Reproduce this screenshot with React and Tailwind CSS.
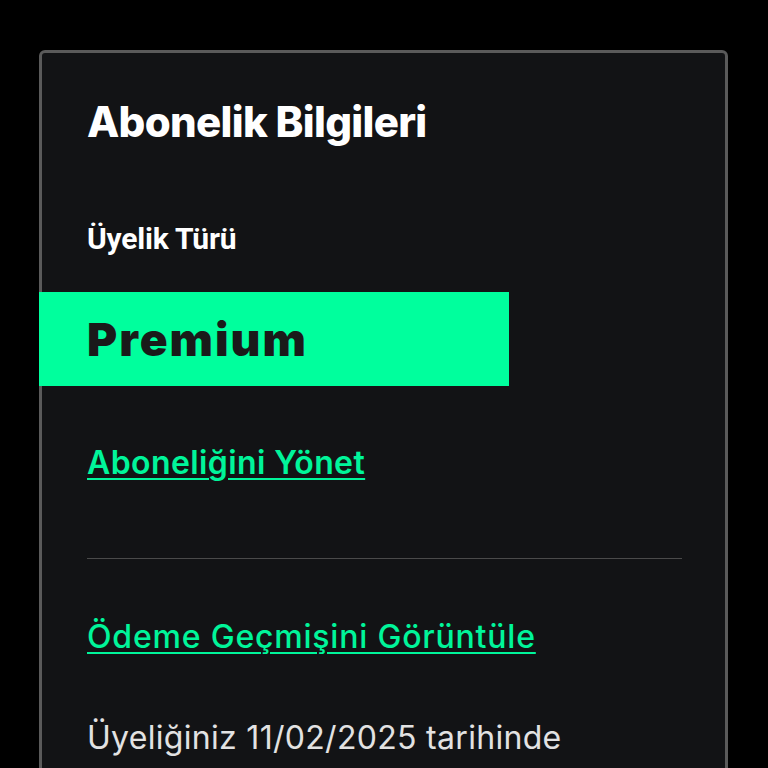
export default function App() {
    return (
        <div className="h-[768px] bg-black pt-[50px] overflow-hidden" style={{ fontFamily: "Inter, sans-serif" }}>
            <div className="ml-[39px] w-[689px] h-[760px] rounded-[6px] border-[3px] border-[#5a5a5a] bg-[#121315] pt-[48px]">
                <h2 className="px-[45px] text-[42px] leading-[42px] font-extrabold tracking-[-0.7px] text-white">
                    Abonelik Bilgileri
                </h2>
                <div
                    className="mt-[81px] px-[45px] text-[30px] leading-[30px] font-bold tracking-[-0.2px] text-white"
                    style={{ fontFamily: "Roboto, sans-serif" }}
                >
                    Üyelik Türü
                </div>
                <div className="mt-[38px] -ml-[3px] w-[470px] h-[94px] bg-[#00ff9d] pl-[48px] flex items-center">
                    <span className="text-[46px] leading-[46px] font-black tracking-[2px] text-[#1a1a1a]">Premium</span>
                </div>
                <a
                    href="#"
                    className="block mt-[61px] mx-[45px] w-fit text-[32px] leading-[32px] font-semibold tracking-[0.4px] text-[#00f59a] underline decoration-2 underline-offset-4"
                >
                    Aboneliğini Yönet
                </a>
                <div className="mt-[79px] ml-[45px] w-[595px] h-px bg-[#4a4a4a]" />
                <a
                    href="#"
                    className="block mt-[62px] mx-[45px] w-fit text-[32px] leading-[32px] font-medium tracking-[0.8px] text-[#00f59a] underline decoration-2 underline-offset-4"
                >
                    Ödeme Geçmişini Görüntüle
                </a>
                <p className="mt-[69px] px-[45px] text-[32px] leading-[32px] font-normal tracking-[0.3px] text-[#e2e2e2]">
                    Üyeliğiniz 11/02/2025 tarihinde
                </p>
            </div>
        </div>
    );
}
